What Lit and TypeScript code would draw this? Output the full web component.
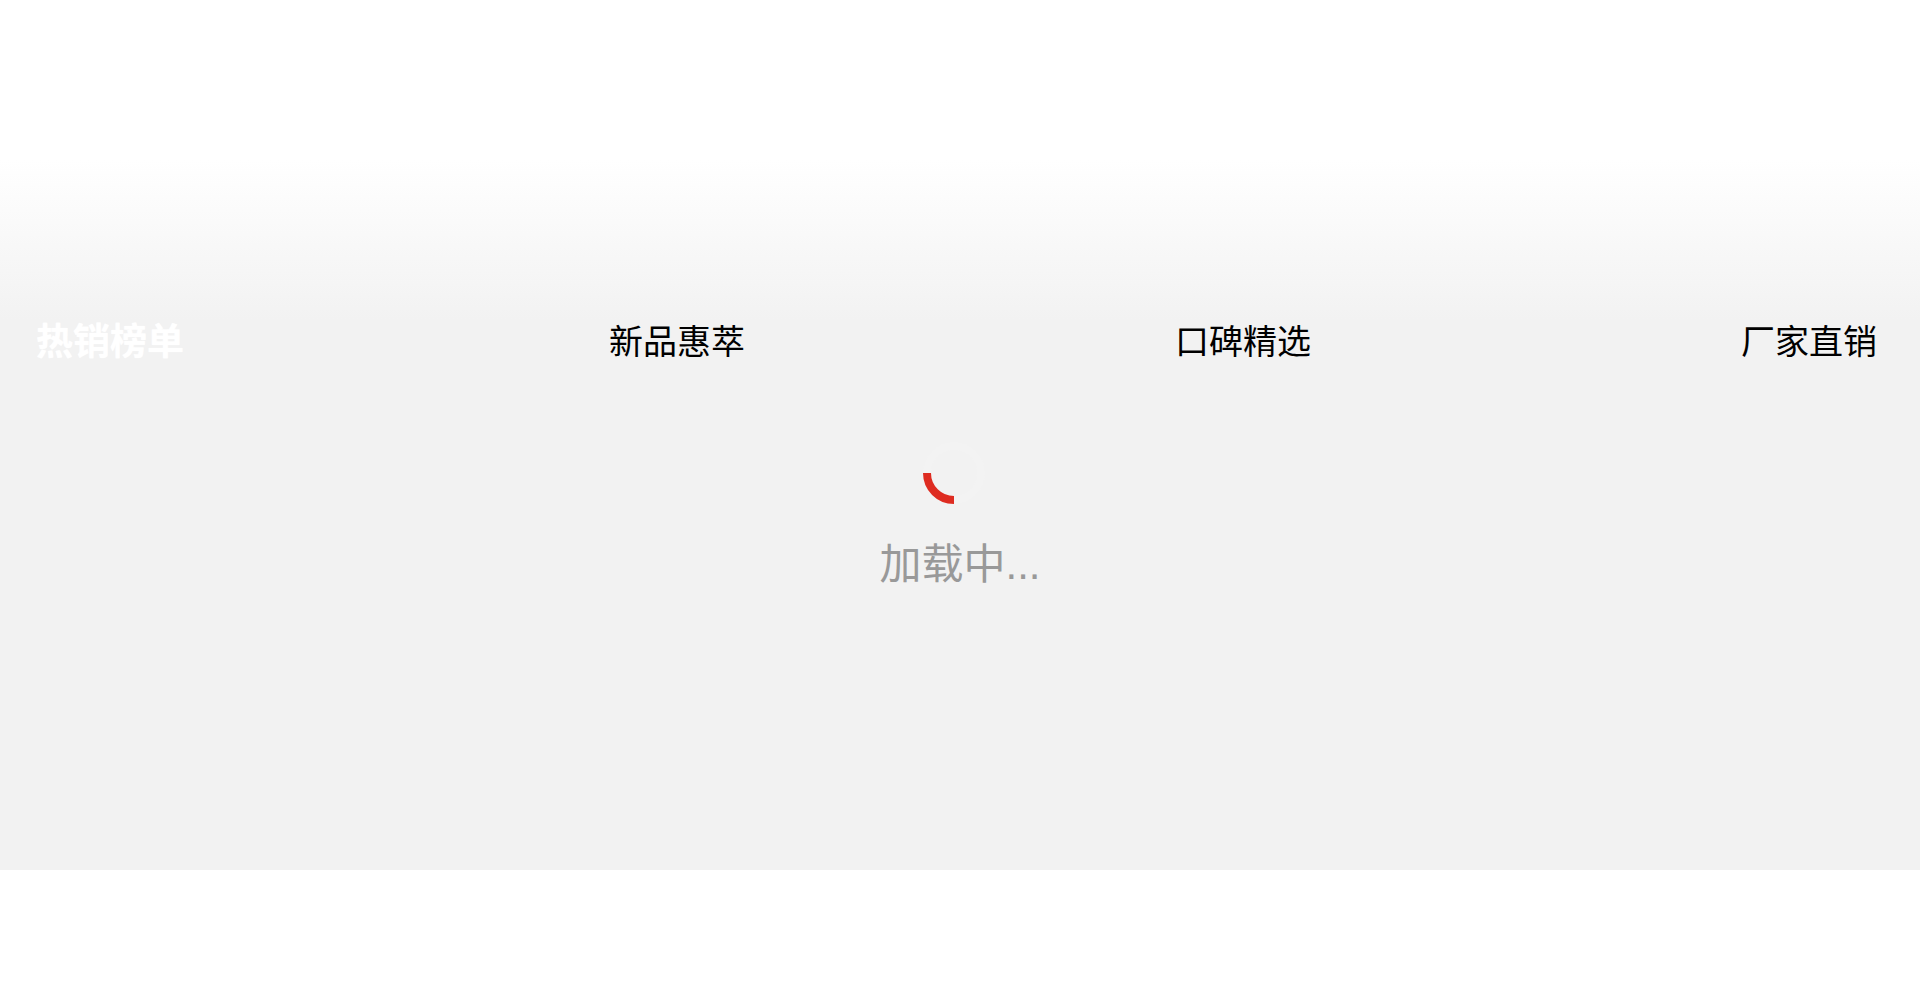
import { LitElement, html, css } from "lit";
import { customElement } from "lit/decorators.js";

const TABS = ["热销榜单", "新品惠萃", "口碑精选", "厂家直销"];

@customElement("app-root")
export class AppRoot extends LitElement {
  static styles = css`
    :host {
      display: block;
      height: 993px;
      background: #fff;
      font-family: "Liberation Sans", "Noto Sans CJK SC", sans-serif;
    }
    .panel {
      height: 870px;
      display: flex;
      flex-direction: column;
      background: linear-gradient(180deg, #fff 0, #fff 160px, #f2f2f2 320px);
    }
    .tabs {
      margin-top: 313px;
      height: 58px;
      padding: 0 43px 0 36px;
      display: flex;
      justify-content: space-between;
      align-items: center;
    }
    .tab {
      font-size: 34px;
      line-height: 58px;
      color: #000;
    }
    .tab.on {
      font-size: 37px;
      font-weight: 700;
      color: #fff;
      padding-top: 2px;
      margin-right: -5px;
      text-shadow: 0 0 1px rgba(255, 255, 255, 0.8);
    }
    .loading {
      margin-top: 70px;
      display: flex;
      flex-direction: column;
      align-items: center;
    }
    .spin {
      display: block;
      margin-left: -13px;
    }
    .text {
      margin-top: 31px;
      font-size: 42px;
      line-height: 58px;
      color: #999;
    }
  `;

  render() {
    return html`
      <div class="panel">
        <div class="tabs">
          ${TABS.map((t, i) => html`<div class="tab ${i === 0 ? "on" : ""}">${t}</div>`)}
        </div>
        <div class="loading">
          <svg class="spin" width="64" height="64" viewBox="0 0 64 64">
            <circle cx="32" cy="32" r="27" fill="none" stroke="#f3f3f3" stroke-width="8" />
            <path d="M5 32A27 27 0 0 0 32 59" fill="none" stroke="#de2c21" stroke-width="8" />
          </svg>
          <div class="text">加载中...</div>
        </div>
      </div>
    `;
  }
}
